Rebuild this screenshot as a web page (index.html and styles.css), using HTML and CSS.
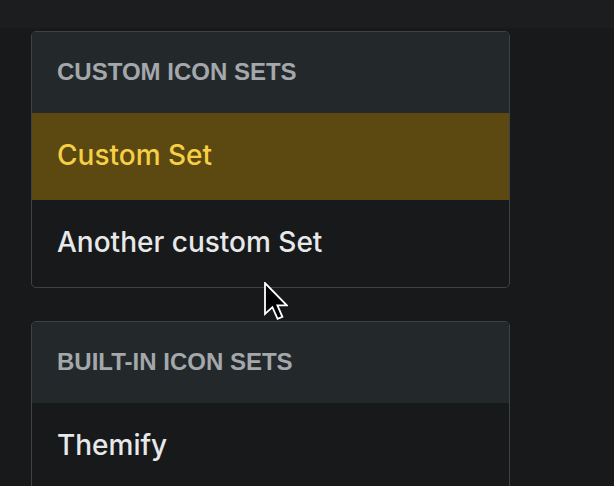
FILE: index.html
```html
<!DOCTYPE html>
<html lang="en">
  <head>
    <meta charset="UTF-8">
    <meta name="viewport" content="width=device-width, initial-scale=1.0">
    <title>Icon Sets</title>
    <link rel="stylesheet" href="styles.css">
  </head>
  <body>
    <div class="topbar"></div>
    <div class="container">
      <div class="set-group">
        <div class="set-group-title">Custom Icon Sets</div>
        <div class="set-item active">Custom Set</div>
        <div class="set-item">Another custom Set</div>
      </div>
      <div class="set-group">
        <div class="set-group-title">Built-in Icon Sets</div>
        <div class="set-item">Themify</div>
      </div>
    </div>
    <svg class="cursor" width="24" height="38" viewBox="0 0 12 19">
      <path d="M0.5 0.5 L0.5 16 L4.2 12.6 L6.8 18.4 L9.2 17.4 L6.7 11.7 L11.4 11.7 Z" fill="#000" stroke="#fff" stroke-width="0.9" stroke-linejoin="miter"/>
    </svg>
  </body>
</html>
```
FILE: styles.css
```css
:root {
  --bg-color: #17191b;
  --band-color: #1b1d1f;
  --card-head: #23282b;
  --card-border: #3e4246;
  --active-bg: #5b4911;
  --active-text: #f6cf45;
  --text-color: #e7e8ea;
  --muted-text: #a4a8ac;
}

body {
  margin: 0;
  padding: 0;
  background-color: var(--bg-color);
  font-family: 'Inter', 'Noto Sans', sans-serif;
  overflow: hidden;
  height: 486px;
  position: relative;
}

.topbar {
  height: 28px;
  background-color: var(--band-color);
}

.container {
  width: 479px;
  padding: 3px 0 0 31px;
  display: flex;
  flex-direction: column;
  gap: 33px;
}

.set-group {
  border: 1px solid var(--card-border);
  border-radius: 5px;
  overflow: hidden;
  background-color: var(--bg-color);
}

.set-group-title {
  height: 81px;
  box-sizing: border-box;
  padding: 26px 25px 0;
  background-color: var(--card-head);
  color: var(--muted-text);
  font-family: 'Liberation Sans', Arial, sans-serif;
  font-weight: bold;
  font-size: 24px;
  line-height: 28px;
  text-transform: uppercase;
}

.set-item {
  height: 87px;
  box-sizing: border-box;
  padding: 27px 25px 0;
  color: var(--text-color);
  font-size: 28px;
  font-weight: 500;
  line-height: 30px;
}

.set-item.active {
  background-color: var(--active-bg);
  color: var(--active-text);
}

.cursor {
  position: absolute;
  left: 264px;
  top: 282px;
}
```
